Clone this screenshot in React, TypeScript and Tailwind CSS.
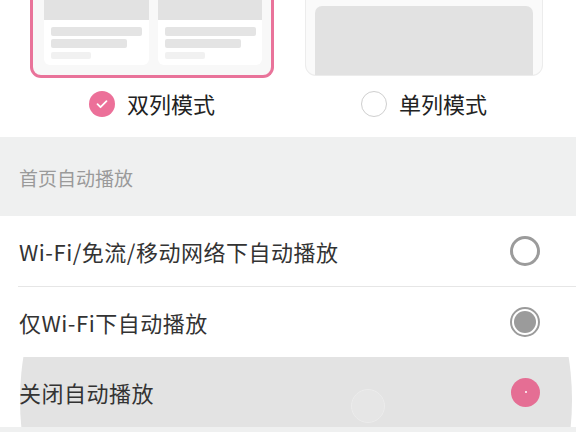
import React from "react";

const font = { fontFamily: '"Noto Sans CJK SC", "Noto Sans", sans-serif' };

const MiniCard = () => (
  <div className="flex h-[65px] w-[105px] flex-col rounded-b-[6px] bg-white">
    <div className="h-[20px] w-full bg-[#e2e2e2]" />
    <div className="mt-[7px] ml-[7px] h-[9px] w-[91px] rounded-[2px] bg-[#e4e4e4]" />
    <div className="mt-[3px] ml-[7px] h-[9px] w-[76px] rounded-[2px] bg-[#e4e4e4]" />
    <div className="mt-[4px] ml-[7px] h-[7px] w-[40px] rounded-[2px] bg-[#f1f1f1]" />
  </div>
);

const Row = ({
  label,
  radio,
  divider,
  children,
}: {
  label: string;
  radio: React.ReactNode;
  divider?: boolean;
  children?: React.ReactNode;
}) => (
  <div className="relative overflow-hidden bg-white">
    {children}
    <div className="relative flex h-[70px] items-center justify-between pl-[19px] pr-[36px]">
      <span className="text-[22px] tracking-[0.5px] text-[#333]">{label}</span>
      {radio}
    </div>
    {divider && <div className="relative ml-[18px] h-px bg-[#e6e6e6]" />}
  </div>
);

export default function App() {
  return (
    <div className="h-[432px] w-[576px] overflow-hidden bg-white" style={font}>
      {/* layout mode picker */}
      <div className="flex h-[137px] justify-between pl-[30px] pr-[33px]">
        <div className="flex w-[244px] flex-col items-center">
          <div className="flex h-[78px] w-full justify-center gap-[9px] rounded-b-[11px] border-[3px] border-t-0 border-[#e9739a] bg-[#f8f8f8] pl-[11px] pr-[9px]">
            <MiniCard />
            <MiniCard />
          </div>
          <div className="mt-[9px] flex items-center gap-[12px]">
            <div className="flex h-[26px] w-[26px] items-center justify-center rounded-full bg-[#ec7099]">
              <svg width="14" height="14" viewBox="0 0 14 14" fill="none">
                <path d="M2.5 7.2l3 3 6-6" stroke="white" strokeWidth="1.8" strokeLinecap="round" strokeLinejoin="round" />
              </svg>
            </div>
            <span className="text-[22px] text-[#222]">双列模式</span>
          </div>
        </div>
        <div className="flex w-[238px] flex-col items-center">
          <div className="flex h-[76px] w-full justify-center rounded-b-[11px] border border-t-0 border-[#ececec] bg-[#fafafa] pt-[6px]">
            <div className="h-full w-[218px] rounded-t-[7px] bg-[#e2e2e2]" />
          </div>
          <div className="mt-[11px] flex items-center gap-[12px]">
            <div className="h-[26px] w-[26px] rounded-full border border-[#cfcfcf]" />
            <span className="text-[22px] text-[#222]">单列模式</span>
          </div>
        </div>
      </div>

      {/* section header */}
      <div className="flex h-[79px] items-center bg-[#eff0f0] pl-[19px] pt-[3px]">
        <span className="text-[19px] text-[#9a9a9a]">首页自动播放</span>
      </div>

      <Row
        label="Wi-Fi/免流/移动网络下自动播放"
        divider
        radio={<div className="h-[30px] w-[30px] rounded-full border-[3px] border-[#9b9b9b]" />}
      />
      <Row
        label="仅Wi-Fi下自动播放"
        radio={
          <div className="flex h-[30px] w-[30px] items-center justify-center rounded-full border-[2px] border-[#9b9b9b]">
            <div className="h-[22px] w-[22px] rounded-full bg-[#9b9b9b]" />
          </div>
        }
      />
      <Row
        label="关闭自动播放"
        radio={
          <div className="flex h-[29px] w-[29px] items-center justify-center rounded-full bg-[#e56e94]">
            <div className="h-[2px] w-[2px] rounded-full bg-white" />
          </div>
        }
      >
        {/* touch ripple */}
        <div className="absolute left-[20px] top-[-233px] h-[552px] w-[552px] rounded-full bg-[#e3e3e3]" />
        <div className="absolute left-[351px] top-[32px] h-[34px] w-[34px] rounded-full border border-[#ececec] bg-[#e6e6e6]" />
      </Row>
      <div className="h-[10px] bg-[#eff0f0]" />
    </div>
  );
}
